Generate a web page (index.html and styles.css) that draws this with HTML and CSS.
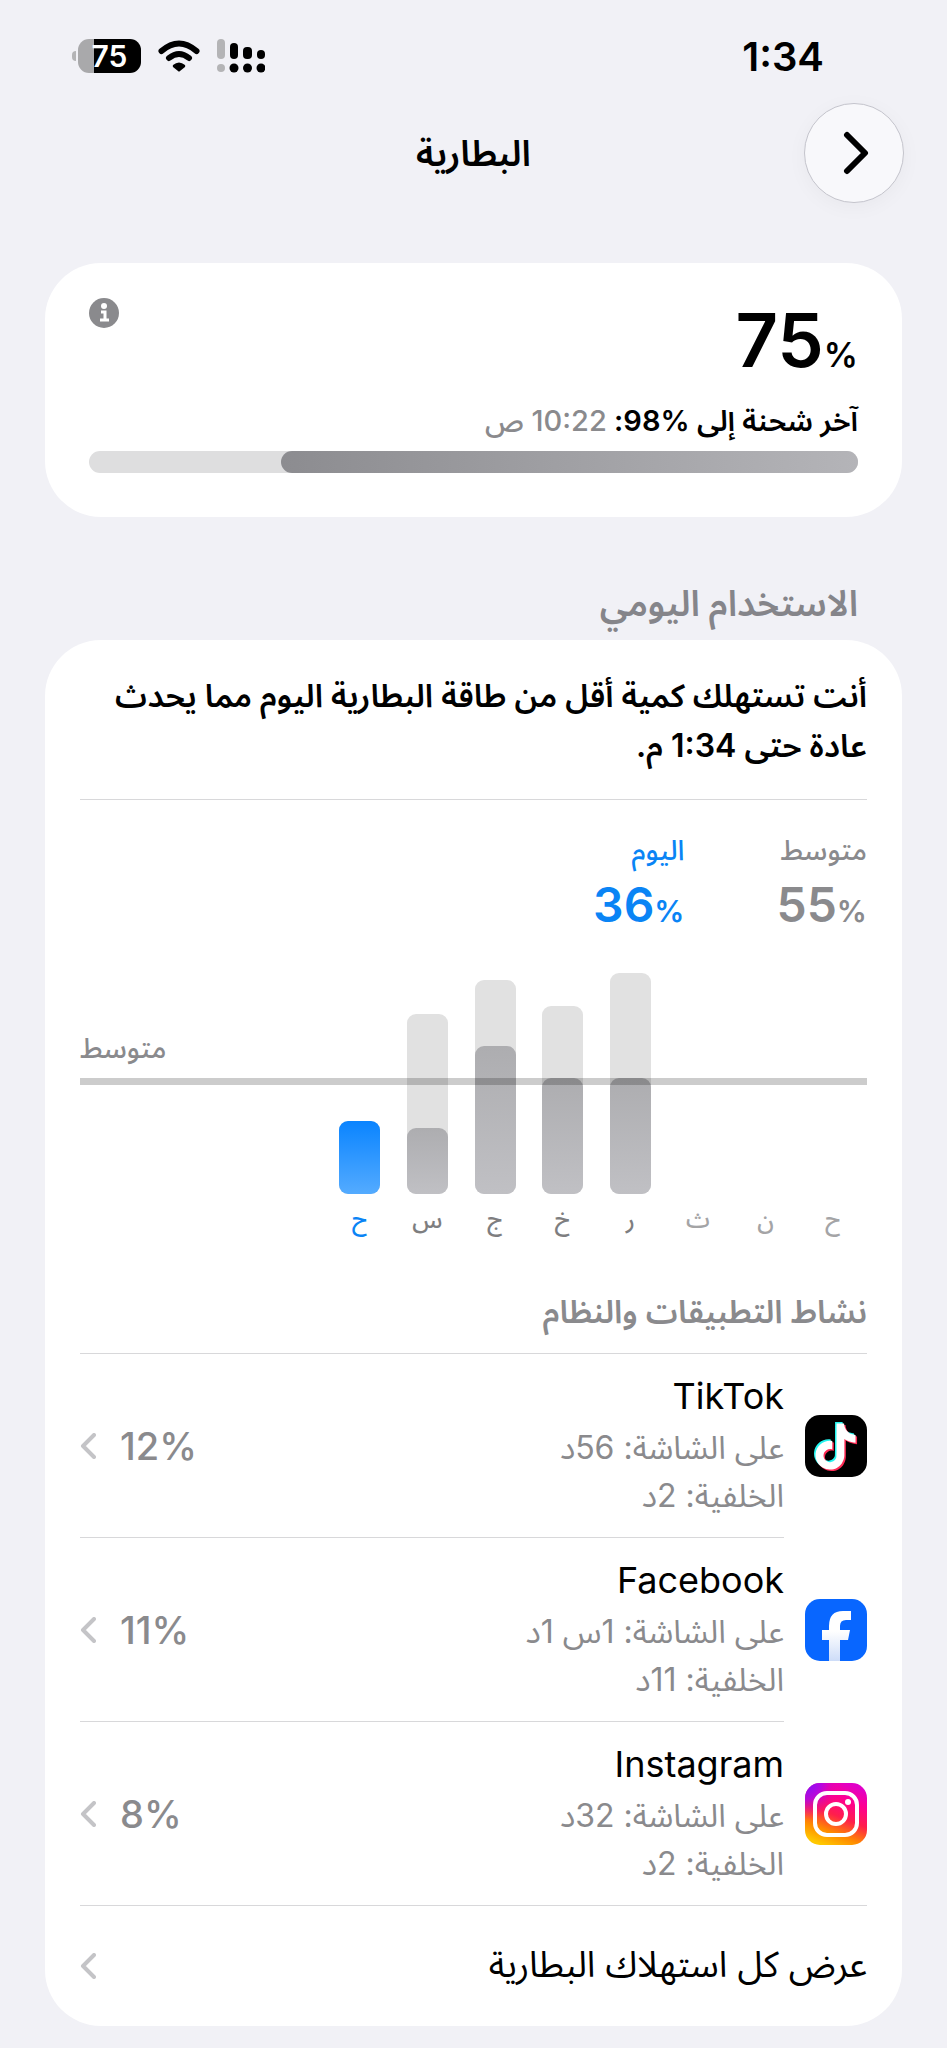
FILE: index.html
```html
<!DOCTYPE html>
<html lang="ar" dir="rtl">
<head>
    <meta charset="UTF-8">
    <meta name="viewport" content="width=device-width, initial-scale=1.0">
    <title>البطارية</title>
    <link rel="stylesheet" href="styles.css">
</head>
<body>
    <div class="status-bar">
        <span class="status-time">1:34</span>
        <div class="status-icons">
            <svg width="48" height="34" viewBox="0 0 48 34" aria-hidden="true">
                <g fill="#b4b4b6">
                    <rect x="0" y="0" width="8" height="20" rx="4" />
                    <circle cx="4" cy="29" r="4" />
                </g>
                <rect x="13" y="4" width="8" height="16" rx="4" />
                <rect x="26" y="8" width="9" height="12" rx="4" />
                <rect x="40" y="11" width="8" height="9" rx="4" />
                <circle cx="17" cy="29" r="4.500" />
                <circle cx="30.500" cy="29" r="4.500" />
                <circle cx="44" cy="29" r="4.500" />
            </svg>
            <svg width="42" height="32" viewBox="0 0 42 32" aria-hidden="true">
                <g fill="none" stroke="#000" stroke-width="6">
                    <path d="M3.500 11Q21-4 38.500 11" stroke-linecap="round" />
                    <path d="M11 18Q21 10 31 18" stroke-linecap="round" />
                </g>
                <path d="M15 25Q21 20 27 25Q27.500 26 27 27L22 31Q21 32 20 31L15 27Q14.500 26 15 25Z" />
            </svg>
            <div class="battery">
                <span class="battery-body">75</span>
                <span class="battery-cap"></span>
            </div>
        </div>
    </div>

    <div class="nav">
        <button class="back-button" aria-label="رجوع">
            <svg width="30" height="44" viewBox="0 0 30 44" aria-hidden="true">
                <path d="M8 4L26 22L8 40" fill="none" stroke="#000" stroke-width="6" stroke-linecap="round" stroke-linejoin="round" />
            </svg>
        </button>
        <h1>البطارية</h1>
    </div>

    <div class="card charge">
        <div class="charge-top">
            <span class="charge-level" dir="ltr">75<small>%</small></span>
            <button class="info-button" aria-label="معلومات">
                <svg width="30" height="30" viewBox="0 0 30 30" aria-hidden="true">
                    <circle cx="15" cy="15" r="15" fill="#8a8a8d" />
                    <circle cx="15" cy="8" r="3" fill="#fff" />
                    <path d="M12 14H16V22M11 22H20" fill="none" stroke="#fff" stroke-width="3" />
                </svg>
            </button>
        </div>
        <p class="last-charge">آخر شحنة إلى <bdi dir="ltr">98%</bdi>: <span>10:22 ص</span></p>
        <div class="charge-bar"><div class="charge-fill" style="width: 75%"></div></div>
    </div>

    <h2 class="section-title">الاستخدام اليومي</h2>

    <div class="card usage">
        <p class="summary">أنت تستهلك كمية أقل من طاقة البطارية اليوم مما يحدث عادة حتى 1:34 م.</p>

        <div class="legend">
            <div class="legend-item">
                <span class="legend-label">متوسط</span>
                <span class="legend-value" dir="ltr">55<small>%</small></span>
            </div>
            <div class="legend-item today">
                <span class="legend-label">اليوم</span>
                <span class="legend-value" dir="ltr">36<small>%</small></span>
            </div>
        </div>

        <!-- Weekly chart -->
        <div class="chart">
            <div class="bars">
                <div class="bar"></div>
                <div class="bar"></div>
                <div class="bar"></div>
                <div class="bar" style="height: 100%"><div class="bar-fill" style="height: 52.5%"></div></div>
                <div class="bar" style="height: 85%"><div class="bar-fill" style="height: 61.7%"></div></div>
                <div class="bar" style="height: 97%"><div class="bar-fill" style="height: 69%"></div></div>
                <div class="bar" style="height: 81.5%"><div class="bar-fill" style="height: 36.5%"></div></div>
                <div class="bar" style="height: 33%"><div class="bar-fill bar-today" style="height: 100%"></div></div>
            </div>
            <div class="average">متوسط</div>
        </div>
        <div class="days">
            <span class="empty">ح</span>
            <span class="empty">ن</span>
            <span class="empty">ث</span>
            <span>ر</span>
            <span>خ</span>
            <span>ج</span>
            <span>س</span>
            <span class="today">ح</span>
        </div>

        <h3 class="activity-title">نشاط التطبيقات والنظام</h3>

        <!-- Apps -->
        <a class="app" href="#">
            <svg class="app-icon" viewBox="0 0 62 62" aria-hidden="true">
                <defs>
                    <path id="note" d="M12.525.02c1.31-.02 2.61-.01 3.91-.02.08 1.53.63 3.09 1.75 4.17 1.12 1.11 2.7 1.62 4.24 1.79v4.03c-1.44-.05-2.89-.35-4.2-.97-.57-.26-1.1-.59-1.62-.93-.01 2.92.01 5.84-.02 8.75-.08 1.4-.54 2.79-1.35 3.94-1.31 1.92-3.58 3.17-5.91 3.21-1.43.08-2.86-.31-4.08-1.03-2.02-1.19-3.44-3.37-3.65-5.71-.02-.5-.03-1-.01-1.49.18-1.9 1.12-3.72 2.58-4.96 1.66-1.44 3.98-2.13 6.15-1.72.02 1.48-.04 2.96-.04 4.44-.99-.32-2.15-.23-3.02.37-.63.41-1.11 1.04-1.36 1.75-.21.51-.15 1.07-.14 1.61.24 1.64 1.82 3.02 3.5 2.87 1.12-.01 2.19-.66 2.77-1.61.19-.33.4-.67.41-1.06.1-1.79.06-3.57.07-5.36.01-4.03-.01-8.05.02-12.07z" />
                </defs>
                <rect width="62" height="62" rx="15" />
                <use href="#note" fill="#25f4ee" transform="translate(6 7) scale(1.920)" />
                <use href="#note" fill="#fe2c55" transform="translate(9 10) scale(1.920)" />
                <use href="#note" fill="#fff" transform="translate(7.500 8.500) scale(1.920)" />
            </svg>
            <div class="app-body">
                <div class="app-text">
                    <span class="app-name">TikTok</span>
                    <span>على الشاشة: 56د</span>
                    <span>الخلفية: 2د</span>
                </div>
                <span class="app-value" dir="ltr">12%</span>
                <svg class="chevron" viewBox="0 0 16 26" aria-hidden="true"><path d="M14 2L3 13L14 24" /></svg>
            </div>
        </a>
        <a class="app" href="#">
            <svg class="app-icon" viewBox="0 0 62 62" aria-hidden="true">
                <defs>
                    <linearGradient id="fbFade" x1="0" y1="0" x2="0" y2="1">
                        <stop offset="40%" stop-color="#fff" />
                        <stop offset="100%" stop-color="#cddcf8" />
                    </linearGradient>
                </defs>
                <rect width="62" height="62" rx="15" fill="#0866ff" />
                <path d="M24 62V41H17V31H24V27Q24 12 38 12H46V21H41Q35 21 35 27V31H45L43 41H35V62Z" fill="url(#fbFade)" />
            </svg>
            <div class="app-body">
                <div class="app-text">
                    <span class="app-name">Facebook</span>
                    <span>على الشاشة: 1س 1د</span>
                    <span>الخلفية: 11د</span>
                </div>
                <span class="app-value" dir="ltr">11%</span>
                <svg class="chevron" viewBox="0 0 16 26" aria-hidden="true"><path d="M14 2L3 13L14 24" /></svg>
            </div>
        </a>
        <a class="app" href="#">
            <svg class="app-icon" viewBox="0 0 62 62" aria-hidden="true">
                <defs>
                    <linearGradient id="igBase" x1="0.3" y1="1" x2="0.7" y2="0">
                        <stop offset="0%" stop-color="#ffc800" />
                        <stop offset="22%" stop-color="#ff8a00" />
                        <stop offset="48%" stop-color="#ff1f4b" />
                        <stop offset="75%" stop-color="#ff0090" />
                        <stop offset="100%" stop-color="#e000c8" />
                    </linearGradient>
                    <radialGradient id="igCorner" cx="0" cy="0" r="0.6">
                        <stop offset="0%" stop-color="#7a10ff" />
                        <stop offset="45%" stop-color="#a808f0" stop-opacity="0.8" />
                        <stop offset="100%" stop-color="#ff0090" stop-opacity="0" />
                    </radialGradient>
                </defs>
                <rect width="62" height="62" rx="15" fill="url(#igBase)" />
                <rect width="62" height="62" rx="15" fill="url(#igCorner)" />
                <g fill="none" stroke="#fff" stroke-width="4">
                    <rect x="10" y="10" width="42" height="42" rx="12" />
                    <circle cx="31" cy="31" r="10" />
                </g>
                <circle cx="43" cy="19" r="3" fill="#fff" />
            </svg>
            <div class="app-body">
                <div class="app-text">
                    <span class="app-name">Instagram</span>
                    <span>على الشاشة: 32د</span>
                    <span>الخلفية: 2د</span>
                </div>
                <span class="app-value" dir="ltr">8%</span>
                <svg class="chevron" viewBox="0 0 16 26" aria-hidden="true"><path d="M14 2L3 13L14 24" /></svg>
            </div>
        </a>
        <a class="show-all" href="#">
            <span>عرض كل استهلاك البطارية</span>
            <svg class="chevron" viewBox="0 0 16 26" aria-hidden="true"><path d="M14 2L3 13L14 24" /></svg>
        </a>
    </div>
</body>
</html>
```
FILE: styles.css
```css
/* General Styles */
* {
    box-sizing: border-box;
}

body {
    font-family: Inter, "Noto Sans Arabic", "DejaVu Sans", sans-serif;
    background-color: #f1f1f6;
    color: #000;
    margin: 0;
    padding: 0 45px 23px;
}

h1, h2, h3, p {
    margin: 0;
}

a {
    color: inherit;
    text-decoration: none;
}

button {
    padding: 0;
    border: none;
    background: none;
    cursor: pointer;
}

svg {
    display: block;
    flex-shrink: 0;
}

small {
    line-height: 1;
}

/* Status bar */
.status-bar {
    display: flex;
    justify-content: space-between;
    align-items: center;
    height: 103px;
    padding: 16px 78px 7px 27px;
}

.status-time {
    font-size: 40px;
    font-weight: 600;
}

.status-icons {
    display: flex;
    align-items: center;
    gap: 17px;
}

.battery {
    display: flex;
    align-items: center;
    gap: 2px;
}

.battery-body {
    width: 63px;
    height: 34px;
    border-radius: 11px;
    background: linear-gradient(to left, #000 75%, #a9a9ab 75%);
    color: #fff;
    font-size: 30px;
    font-weight: 600;
    line-height: 34px;
    text-align: center;
}

.battery-cap {
    width: 4px;
    height: 10px;
    border-radius: 4px 0 0 4px;
    background-color: #b4b4b6;
}

/* Navigation */
.nav {
    display: grid;
    grid-template-columns: 100px 1fr 100px;
    align-items: center;
    margin: 0 -2px 60px;
}

.nav h1 {
    font-size: 36px;
    font-weight: 600;
    line-height: 48px;
    text-align: center;
}

.back-button {
    display: flex;
    align-items: center;
    justify-content: center;
    width: 100px;
    height: 100px;
    border: 1px solid #c4c4cc;
    border-radius: 50%;
    background-color: #f8f8fb;
    box-shadow: 0 4px 20px rgba(0, 0, 0, 0.04);
}

/* Cards */
.card {
    background-color: #fff;
    border-radius: 56px;
}

.charge {
    padding: 35px 44px 44px;
}

.charge-top {
    display: flex;
    justify-content: space-between;
    align-items: flex-start;
}

.charge-level {
    font-size: 74px;
    font-weight: 600;
    line-height: 84px;
}

.charge-level small {
    font-size: 34px;
}

.last-charge {
    margin: 17px 0 8px;
    font-size: 29px;
    font-weight: 600;
    line-height: 44px;
}

.last-charge span {
    color: #8a8a8d;
    font-weight: 500;
}

.charge-bar {
    height: 22px;
    border-radius: 11px;
    background-color: #dededf;
}

.charge-fill {
    height: 22px;
    border-radius: 11px;
    background: linear-gradient(to left, #b4b4b8, #8c8c90);
}

.section-title {
    margin: 62px 44px 13px;
    color: #85858a;
    font-size: 36px;
    font-weight: 600;
    line-height: 48px;
}

.usage {
    padding: 0 35px;
}

.summary {
    padding: 31px 0 28px;
    border-bottom: 1px solid #d8d8da;
    font-size: 32px;
    font-weight: 600;
    line-height: 50px;
}

/* Legend */
.legend {
    display: flex;
    gap: 92px;
    padding: 30px 0 40px;
    color: #8a8a8d;
}

.legend-item {
    display: flex;
    flex-direction: column;
    gap: 7px;
}

.legend-label {
    font-size: 28px;
    font-weight: 500;
    line-height: 40px;
}

.legend-value {
    font-size: 48px;
    font-weight: 600;
    line-height: 56px;
}

.legend-value small {
    font-size: 30px;
}

.legend .today, .days .today {
    color: #0a84f5;
}

/* Chart */
.chart {
    position: relative;
    height: 221px;
}

.bars, .days {
    display: grid;
    grid-template-columns: repeat(8, 1fr);
    justify-items: center;
    padding-left: 246px;
}

.bars {
    height: 100%;
    align-items: end;
}

.bar {
    display: flex;
    align-items: flex-end;
    width: 41px;
    border-radius: 9px;
    background-color: #e1e1e1;
}

.bar-fill {
    width: 100%;
    border-radius: 9px;
    background: linear-gradient(#adadb0, #c0c0c4);
}

.bar-today {
    background: linear-gradient(#0a84ff, #54abff);
}

/* average line lies over the bars */
.average {
    position: absolute;
    left: 0;
    right: 0;
    bottom: 109px;
    padding-bottom: 10px;
    border-bottom: 7px solid rgba(0, 0, 0, 0.2);
    color: #8a8a8d;
    font-size: 28px;
    font-weight: 500;
    line-height: 40px;
    text-align: left;
}

.days {
    margin-top: 4px;
    color: #7e7e80;
    font-size: 24px;
    font-weight: 500;
    line-height: 44px;
}

.days .empty {
    color: #a4a4a6;
}

.activity-title {
    padding: 46px 0 17px;
    border-bottom: 1px solid #d8d8da;
    color: #8a8a8d;
    font-size: 32px;
    font-weight: 600;
    line-height: 48px;
}

/* App rows */
.app {
    display: flex;
    align-items: center;
    gap: 21px;
}

.app-icon {
    width: 62px;
    height: 62px;
}

.app-body {
    flex: 1;
    display: flex;
    align-items: center;
    padding: 18px 0 17px;
    border-bottom: 1px solid #d8d8da;
}

.app:nth-last-of-type(2) .app-body {
    border-bottom: none;
}

.app-text {
    flex: 1;
    display: flex;
    flex-direction: column;
    color: #8a8a8d;
    font-size: 32px;
    line-height: 48px;
}

.app-name {
    margin-bottom: 4px;
    color: #000;
    font-size: 36px;
}

.app-value {
    width: 76px;
    color: #8a8a8d;
    font-size: 38px;
    font-weight: 500;
}

.chevron {
    width: 16px;
    height: 26px;
    margin-right: 24px;
    fill: none;
    stroke: #c4c4c7;
    stroke-width: 4;
    stroke-linecap: round;
    stroke-linejoin: round;
}

.show-all {
    display: flex;
    justify-content: space-between;
    align-items: center;
    height: 121px;
    border-top: 1px solid #d8d8da;
    font-size: 36px;
}
```
